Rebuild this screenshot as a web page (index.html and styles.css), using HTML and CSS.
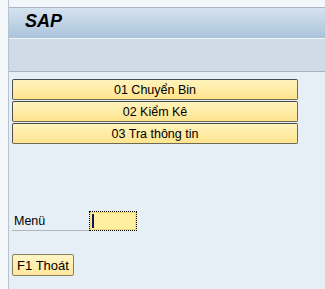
FILE: index.html
```html
<!DOCTYPE html>
<html>
<head>
<meta charset="utf-8">
<link rel="stylesheet" href="styles.css">
</head>
<body>
<div class="frame">
  <div class="gutter"></div>
  <div class="main">
    <div class="topgap"></div>
    <header class="titlebar"><span class="logo">SAP</span></header>
    <div class="toolbar"></div>
    <section class="content">
      <div class="menu-buttons">
        <button class="menu-btn">01 Chuyển Bin</button>
        <button class="menu-btn">02 Kiểm Kê</button>
        <button class="menu-btn">03 Tra thông tin</button>
      </div>
      <div class="field-row">
        <label class="field-label">Menü</label>
        <div class="field-input"><span class="caret"></span></div>
      </div>
      <div class="footer">
        <button class="fn-btn">F1 Thoát</button>
      </div>
    </section>
  </div>
</div>
</body>
</html>
```
FILE: styles.css
```css
html, body {
  margin: 0;
  padding: 0;
  width: 325px;
  height: 289px;
  overflow: hidden;
  font-family: "Liberation Sans", Arial, sans-serif;
}
.frame {
  display: flex;
  height: 289px;
}
.gutter {
  width: 8px;
  background: #f5f8fb;
  border-right: 1px solid #b8c3d1;
}
.main {
  flex: 1;
  display: flex;
  flex-direction: column;
  background: #e6eef6;
}
.topgap {
  height: 7px;
  background: #f3f6fa;
  border-bottom: 1px solid #aab5c5;
}
.titlebar {
  height: 30px;
  background: linear-gradient(#d6e3f0, #aac3da);
  border-bottom: 1px solid #eef3f8;
  display: flex;
  align-items: center;
  padding-left: 16px;
}
.logo {
  font-family: "Liberation Sans", Arial, sans-serif;
  font-weight: bold;
  font-style: italic;
  font-size: 18px;
  color: #000;
  margin-top: -4px;
}
.toolbar {
  height: 32px;
  background: #cfdce8;
  border-bottom: 1px solid #a6b3c5;
}
.content {
  flex: 1;
  padding: 7px 0 0 3px;
  display: flex;
  flex-direction: column;
}
.menu-buttons {
  display: flex;
  flex-direction: column;
  gap: 1px;
  width: 286px;
}
.menu-btn {
  height: 21px;
  margin: 0;
  padding: 0;
  border: 1px solid #6e6a58;
  border-top-color: #4a4a4a;
  border-left-color: #505050;
  border-radius: 2px;
  background: linear-gradient(#fff3bd, #ffe48e);
  font-family: "Liberation Sans", Arial, sans-serif;
  font-size: 12.5px;
  color: #000;
  text-align: center;
}
.field-row {
  margin-top: 67px;
  display: flex;
  align-items: stretch;
  height: 20px;
}
.field-label {
  width: 77px;
  border-bottom: 1px solid #b2b6bc;
  font-size: 12.5px;
  color: #000;
  padding-left: 2px;
  display: flex;
  align-items: flex-end;
  padding-bottom: 2px;
  box-sizing: border-box;
}
.field-input {
  width: 48px;
  box-sizing: border-box;
  border: 1px dotted #000;
  background: #fff0a0;
  box-shadow: inset 0 0 0 1px #f3da80;
  padding: 2px 2px;
  display: flex;
}
.caret {
  width: 2px;
  background: #101060;
}
.footer {
  margin-top: 23px;
}
.fn-btn {
  height: 22px;
  width: 62px;
  margin: 0;
  padding: 0 2px;
  border: 1px solid #8a7f5c;
  border-radius: 2px;
  background: linear-gradient(#fff6c8, #ffe89c);
  font-family: "Liberation Sans", Arial, sans-serif;
  font-size: 13px;
  color: #000;
  text-align: center;
}
```
